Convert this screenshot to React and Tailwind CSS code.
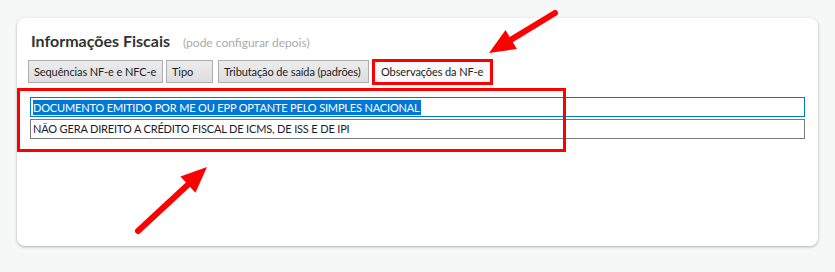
import React from 'react';

const tabs = [
  { label: 'Sequências NF-e e NFC-e', w: 'w-[135px]', gap: 'mr-[3px]' },
  { label: 'Tipo', w: 'w-[47px]', gap: 'mr-[5px]' },
  { label: 'Tributação de saída (padrões)', w: 'w-[151px]', gap: 'mr-[3px]' },
];

const Arrow = ({ x1, y1, x2, y2 }) => {
  // shaft + filled head, pointing from (x1,y1) to (x2,y2)
  const dx = x2 - x1;
  const dy = y2 - y1;
  const len = Math.sqrt(dx * dx + dy * dy);
  const ux = dx / len;
  const uy = dy / len;
  const headLen = 26;
  const headHalf = 11;
  const bx = x2 - ux * headLen;
  const by = y2 - uy * headLen;
  const px = -uy;
  const py = ux;
  const pts = `${x2},${y2} ${bx + px * headHalf},${by + py * headHalf} ${bx - px * headHalf},${by - py * headHalf}`;
  return (
    <g>
      <line x1={x1} y1={y1} x2={bx + ux * 4} y2={by + uy * 4} stroke="#ff0000" strokeWidth="6" strokeLinecap="round" />
      <polygon points={pts} fill="#ff0000" />
    </g>
  );
};

export default function App() {
  return (
    <div className="relative w-[835px] h-[272px] bg-[#f6f7f7] pt-[18px] pl-[17px] font-['Lato','Liberation_Sans',sans-serif] overflow-hidden">
      <div className="w-[801px] h-[228px] bg-white rounded-[8px] shadow-[0_1px_3px_rgba(0,0,0,0.3)] pt-[13px] pl-[11px]">
        {/* Header */}
        <div className="flex items-baseline pl-[3px] leading-[20px]">
          <h2 className="text-[16px] font-bold text-[#333]">Informações Fiscais</h2>
          <span className="ml-[13px] text-[12px] text-[#aaa]">(pode configurar depois)</span>
        </div>

        {/* Tabs */}
        <div className="flex items-center mt-[7px] h-[23px]">
          {tabs.map((t) => (
            <button
              key={t.label}
              className={`h-[23px] ${t.w} ${t.gap} pl-[5px] text-left border border-[#adadad] bg-gradient-to-b from-[#ececec] to-[#dedede] text-[11px] tracking-[-0.1px] text-[#222] leading-none`}
            >
              {t.label}
            </button>
          ))}
          <span className="flex items-center w-[121px] h-[26px] border-[3px] border-[#ff0000]">
            <button className="h-[20px] w-full pl-[6px] text-left bg-[#fafafa] text-[11px] tracking-[-0.1px] text-[#222] leading-none">
              Observações da NF-e
            </button>
          </span>
        </div>

        {/* Observações */}
        <div className="mt-[14px] ml-[2px] w-[775px] flex flex-col gap-[2px] tracking-[-0.16px]">
          <div className="h-[20px] border border-[#0078d7] flex items-center pl-[2px] text-[11px] text-[#1a1a2e]">
            <span className="bg-[#0078d7] text-white leading-[15px] pr-[1px]">
              DOCUMENTO EMITIDO POR ME OU EPP OPTANTE PELO SIMPLES NACIONAL
            </span>
          </div>
          <div className="h-[20px] border border-[#7a7a7a] flex items-center pl-[2px] text-[11px] text-[#1a1a2e]">
            NÃO GERA DIREITO A CRÉDITO FISCAL DE ICMS, DE ISS E DE IPI
          </div>
        </div>
      </div>

      {/* annotations */}
      <div className="absolute left-[17px] top-[88px] w-[549px] h-[64px] border-[3px] border-[#ff0000]" />
      <svg className="absolute left-0 top-0" width="835" height="272">
        <Arrow x1={555} y1={13} x2={489} y2={53} />
        <Arrow x1={138} y1={231} x2={207} y2={167} />
      </svg>
    </div>
  );
}
